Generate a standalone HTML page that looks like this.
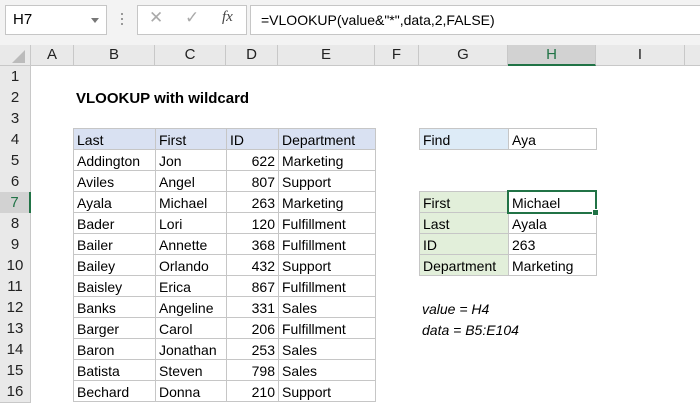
<!DOCTYPE html>
<html><head><meta charset="utf-8"><style>
*{box-sizing:border-box;margin:0;padding:0}
body{width:700px;height:400px;overflow:hidden;background:#fff;font-family:"Liberation Sans",Arial,sans-serif;position:relative}
.a{position:absolute}
.tb{left:0;top:0;width:700px;height:45px;background:#f3f3f3}
.ch{top:45px;height:21px;background:#e9e9e9;border-right:1px solid #c8c8c8;border-bottom:1px solid #c8c8c8;text-align:center;font-size:15px;line-height:20px;color:#222}
.rh{left:0;width:31px;height:22px;background:#e9e9e9;border-bottom:1px solid #c8c8c8;border-right:1px solid #c8c8c8;text-align:center;font-size:15px;line-height:21px;color:#222}
.c{height:22px;border:1px solid #c6c6c6;font-size:14px;line-height:22px;padding-left:3px;white-space:nowrap;color:#000}
.r{text-align:right;padding-right:3px}
.bl{background:#d9e1f2}
.lb{background:#ddebf7}
.gr{background:#e2efda}
</style></head><body>
<div class="a tb"></div>
<div class="a" style="left:5px;top:5px;width:102px;height:30px;background:#fff;border:1px solid #c6c6c6;font-size:15px;line-height:28px;padding-left:7px">H7</div>
<div class="a" style="left:91px;top:18px;width:0;height:0;border-left:4px solid transparent;border-right:4px solid transparent;border-top:5px solid #777"></div>
<div class="a" style="left:121px;top:13px;width:2px;height:2px;background:#999;box-shadow:0 5px #999,0 10px #999"></div>
<div class="a" style="left:137px;top:5px;width:110px;height:30px;background:#fff;border:1px solid #c6c6c6"></div>
<div class="a" style="left:149px;top:8px;font-size:17px;color:#aaa">✕</div>
<div class="a" style="left:185px;top:8px;font-size:17px;color:#aaa">✓</div>
<div class="a" style="left:222px;top:9px;font-size:15px;font-style:italic;font-family:'Liberation Serif',serif;color:#444">fx</div>
<div class="a" style="left:250px;top:5px;width:460px;height:30px;background:#fff;border:1px solid #c6c6c6;font-size:14px;line-height:28px;padding-left:10px">=VLOOKUP(value&amp;"*",data,2,FALSE)</div>

<div class="a ch" style="left:0;width:31px"></div>
<div class="a" style="left:12px;top:50px;width:0;height:0;border-left:13px solid transparent;border-bottom:13px solid #bbb"></div>
<div class="a ch" style="left:31px;width:43px">A</div>
<div class="a ch" style="left:74px;width:81px">B</div>
<div class="a ch" style="left:155px;width:71px">C</div>
<div class="a ch" style="left:226px;width:52px">D</div>
<div class="a ch" style="left:278px;width:97px">E</div>
<div class="a ch" style="left:375px;width:44px">F</div>
<div class="a ch" style="left:419px;width:89px">G</div>
<div class="a ch" style="left:508px;width:88px;background:#d2d2d2;border-bottom:2px solid #217346;color:#217346">H</div>
<div class="a ch" style="left:596px;width:89px">I</div>
<div class="a ch" style="left:685px;width:20px"></div>

<div class="a rh" style="top:66px">1</div>
<div class="a rh" style="top:87px">2</div>
<div class="a rh" style="top:108px">3</div>
<div class="a rh" style="top:129px">4</div>
<div class="a rh" style="top:150px">5</div>
<div class="a rh" style="top:171px">6</div>
<div class="a rh" style="top:192px;background:#d2d2d2;border-right:2px solid #217346;color:#217346">7</div>
<div class="a rh" style="top:213px">8</div>
<div class="a rh" style="top:234px">9</div>
<div class="a rh" style="top:255px">10</div>
<div class="a rh" style="top:276px">11</div>
<div class="a rh" style="top:297px">12</div>
<div class="a rh" style="top:318px">13</div>
<div class="a rh" style="top:339px">14</div>
<div class="a rh" style="top:360px">15</div>
<div class="a rh" style="top:381px">16</div>

<div class="a" style="left:76px;top:89px;font-size:15px;font-weight:bold;line-height:20px">VLOOKUP with wildcard</div>

<div class="a c bl" style="left:73px;top:128px;width:83px">Last</div>
<div class="a c bl" style="left:155px;top:128px;width:72px">First</div>
<div class="a c bl" style="left:226px;top:128px;width:53px">ID</div>
<div class="a c bl" style="left:278px;top:128px;width:98px">Department</div>

<div class="a c" style="left:73px;top:149px;width:83px">Addington</div><div class="a c" style="left:155px;top:149px;width:72px">Jon</div><div class="a c r" style="left:226px;top:149px;width:53px">622</div><div class="a c" style="left:278px;top:149px;width:98px">Marketing</div>
<div class="a c" style="left:73px;top:170px;width:83px">Aviles</div><div class="a c" style="left:155px;top:170px;width:72px">Angel</div><div class="a c r" style="left:226px;top:170px;width:53px">807</div><div class="a c" style="left:278px;top:170px;width:98px">Support</div>
<div class="a c" style="left:73px;top:191px;width:83px">Ayala</div><div class="a c" style="left:155px;top:191px;width:72px">Michael</div><div class="a c r" style="left:226px;top:191px;width:53px">263</div><div class="a c" style="left:278px;top:191px;width:98px">Marketing</div>
<div class="a c" style="left:73px;top:212px;width:83px">Bader</div><div class="a c" style="left:155px;top:212px;width:72px">Lori</div><div class="a c r" style="left:226px;top:212px;width:53px">120</div><div class="a c" style="left:278px;top:212px;width:98px">Fulfillment</div>
<div class="a c" style="left:73px;top:233px;width:83px">Bailer</div><div class="a c" style="left:155px;top:233px;width:72px">Annette</div><div class="a c r" style="left:226px;top:233px;width:53px">368</div><div class="a c" style="left:278px;top:233px;width:98px">Fulfillment</div>
<div class="a c" style="left:73px;top:254px;width:83px">Bailey</div><div class="a c" style="left:155px;top:254px;width:72px">Orlando</div><div class="a c r" style="left:226px;top:254px;width:53px">432</div><div class="a c" style="left:278px;top:254px;width:98px">Support</div>
<div class="a c" style="left:73px;top:275px;width:83px">Baisley</div><div class="a c" style="left:155px;top:275px;width:72px">Erica</div><div class="a c r" style="left:226px;top:275px;width:53px">867</div><div class="a c" style="left:278px;top:275px;width:98px">Fulfillment</div>
<div class="a c" style="left:73px;top:296px;width:83px">Banks</div><div class="a c" style="left:155px;top:296px;width:72px">Angeline</div><div class="a c r" style="left:226px;top:296px;width:53px">331</div><div class="a c" style="left:278px;top:296px;width:98px">Sales</div>
<div class="a c" style="left:73px;top:317px;width:83px">Barger</div><div class="a c" style="left:155px;top:317px;width:72px">Carol</div><div class="a c r" style="left:226px;top:317px;width:53px">206</div><div class="a c" style="left:278px;top:317px;width:98px">Fulfillment</div>
<div class="a c" style="left:73px;top:338px;width:83px">Baron</div><div class="a c" style="left:155px;top:338px;width:72px">Jonathan</div><div class="a c r" style="left:226px;top:338px;width:53px">253</div><div class="a c" style="left:278px;top:338px;width:98px">Sales</div>
<div class="a c" style="left:73px;top:359px;width:83px">Batista</div><div class="a c" style="left:155px;top:359px;width:72px">Steven</div><div class="a c r" style="left:226px;top:359px;width:53px">798</div><div class="a c" style="left:278px;top:359px;width:98px">Sales</div>
<div class="a c" style="left:73px;top:380px;width:83px">Bechard</div><div class="a c" style="left:155px;top:380px;width:72px">Donna</div><div class="a c r" style="left:226px;top:380px;width:53px">210</div><div class="a c" style="left:278px;top:380px;width:98px">Support</div>

<div class="a c lb" style="left:419px;top:128px;width:90px">Find</div>
<div class="a c" style="left:508px;top:128px;width:89px">Aya</div>

<div class="a c gr" style="left:419px;top:191px;width:90px">First</div><div class="a c" style="left:508px;top:191px;width:89px">Michael</div>
<div class="a c gr" style="left:419px;top:212px;width:90px">Last</div><div class="a c" style="left:508px;top:212px;width:89px">Ayala</div>
<div class="a c gr" style="left:419px;top:233px;width:90px">ID</div><div class="a c" style="left:508px;top:233px;width:89px">263</div>
<div class="a c gr" style="left:419px;top:254px;width:90px">Department</div><div class="a c" style="left:508px;top:254px;width:89px">Marketing</div>
<div class="a" style="left:507px;top:190px;width:90px;height:24px;border:2px solid #217346"></div>
<div class="a" style="left:593px;top:210px;width:5px;height:5px;background:#217346;outline:1px solid #fff"></div>

<div class="a" style="left:422px;top:299px;font-size:14px;font-style:italic;line-height:20px">value = H4</div>
<div class="a" style="left:422px;top:320px;font-size:14px;font-style:italic;line-height:20px">data = B5:E104</div>
</body></html>
